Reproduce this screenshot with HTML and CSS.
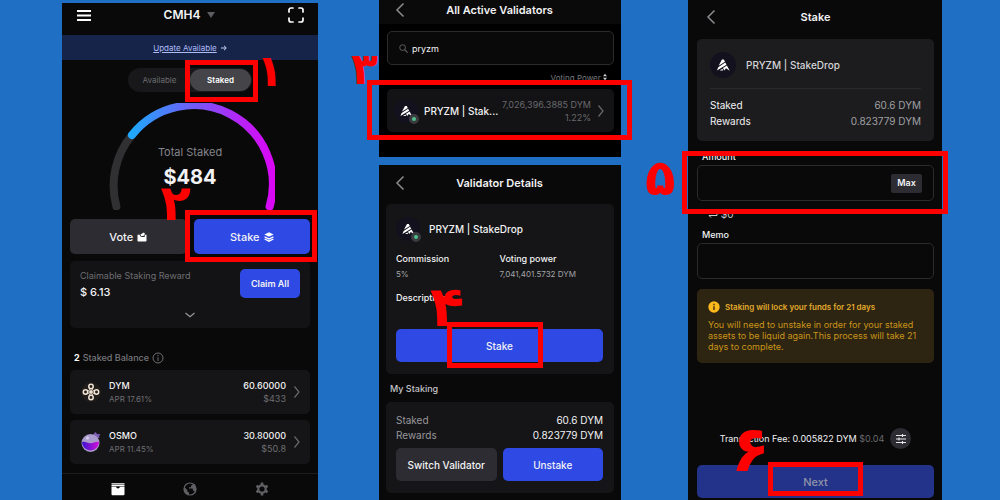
FILE: index.html
```html
<!DOCTYPE html>
<html lang="en">
<head>
    <meta charset="UTF-8">
    <meta name="viewport" content="width=device-width, initial-scale=1.0">
    <title>Staking DYM with PRYZM</title>
    <link rel="stylesheet" href="styles.css">
</head>
<body>
    <!-- shared icons -->
    <svg class="sprite" aria-hidden="true">
        <symbol id="pryzm" viewBox="0 0 24 24">
            <circle cx="12" cy="12" r="12" fill="#14111f"/>
            <path d="M11 7h1.800l1 2-5.800 3.600zM14.100 9.700l1.100 2.100-8.800 5.200 1.200-2.900zM15.600 12.500l2.600 4.700-3.400-2.200-1.600 2-1.200-2.200z" fill="#fff"/>
            <path d="M9 17l2.500-1.500.6 1.500z" fill="#fff"/>
        </symbol>
        <symbol id="back" viewBox="0 0 10 16">
            <path d="M8.500 1.500L2 8l6.500 6.500" fill="none" stroke="currentColor" stroke-width="1.500"/>
        </symbol>
        <symbol id="next" viewBox="0 0 8 14">
            <path d="M1.500 1.500L6 7l-4.500 5.500" fill="none" stroke="currentColor" stroke-width="1.200"/>
        </symbol>
    </svg>

    <main class="board">
        <section class="phone home">
            <header class="topbar">
                <button class="icon-btn" aria-label="Menu">
                    <svg width="14" height="11" viewBox="0 0 14 11"><path d="M0 1h14M0 5.500h14M0 10h14" stroke="#fff" stroke-width="1.800"/></svg>
                </button>
                <button class="account">CMH4 <svg width="8" height="6" viewBox="0 0 8 6"><path d="M0 0h8L4 6z" fill="#5d5d61"/></svg></button>
                <button class="icon-btn" aria-label="Scan">
                    <svg width="16" height="16" viewBox="0 0 16 16"><path d="M1 5V3a2 2 0 0 1 2-2h2M11 1h2a2 2 0 0 1 2 2v2M15 11v2a2 2 0 0 1-2 2h-2M5 15H3a2 2 0 0 1-2-2v-2" fill="none" stroke="#fff" stroke-width="1.700" stroke-linecap="round"/></svg>
                </button>
            </header>
            <div class="update"><a href="#">Update Available</a>
                <svg width="6" height="6" viewBox="0 0 6 6"><path d="M0 3h5M3 .8L5.300 3 3 5.200" fill="none" stroke="#c5cff5"/></svg>
            </div>

            <div class="home-body">
                <div class="toggle">
                    <button>Available</button>
                    <div class="spot">
                        <button class="on">Staked</button>
                        <span class="mark mark-1"></span>
                        <span class="step step-1">۱</span>
                    </div>
                </div>

                <div class="gauge">
                    <svg width="170" height="107" viewBox="-1 0 170 107">
                        <defs>
                            <linearGradient id="arc" x1="0" y1="0" x2="1" y2="0">
                                <stop offset="0" stop-color="#1fa8ff"/>
                                <stop offset=".45" stop-color="#7459f7"/>
                                <stop offset=".75" stop-color="#b327f8"/>
                                <stop offset="1" stop-color="#da07f5"/>
                            </linearGradient>
                        </defs>
                        <path d="M10.400 103.500A79 79 0 0 1 26 32" fill="none" stroke="#303033" stroke-width="8" stroke-linecap="round"/>
                        <path d="M26 32A79 79 0 0 1 163.600 103.500" fill="none" stroke="url(#arc)" stroke-width="8" stroke-linecap="round"/>
                    </svg>
                    <div class="total">
                        <p>Total Staked</p>
                        <strong>$484</strong>
                    </div>
                </div>

                <div class="pair">
                    <button class="btn dark">Vote
                        <svg width="10" height="10" viewBox="0 0 10 10"><path d="M.5 2.800h2.300C3 4.500 4 5 5 5h3l-.6-1.200L8.500 2.800h1v6a.8.8 0 0 1-.8.8H1.300a.8.8 0 0 1-.8-.8z" fill="#fff"/><path d="M3.400 2.600L6.800.4l1.300 1.700L6.300 4H4.200z" fill="#fff"/></svg>
                    </button>
                    <div class="spot">
                        <button class="btn blue">Stake
                            <svg width="10" height="10" viewBox="0 0 10 10"><path d="M5 .2l4.600 2.300L5 4.800.4 2.500z" fill="#fff"/><path d="M.6 4.800L5 7l4.400-2.200M.6 7L5 9.200 9.400 7" fill="none" stroke="#fff" stroke-width="1.300"/></svg>
                        </button>
                        <span class="mark mark-2"></span>
                        <span class="step step-2">۲</span>
                    </div>
                </div>

                <div class="claim">
                    <div>
                        <p class="muted">Claimable Staking Reward</p>
                        <p class="reward">$ 6.13</p>
                    </div>
                    <button class="btn blue small">Claim All</button>
                    <svg class="more" width="12" height="6" viewBox="0 0 12 6"><path d="M1.500 1L6 4.800 10.500 1" fill="none" stroke="#98989c" stroke-width="1.200"/></svg>
                </div>

                <h2 class="balance"><b>2</b> Staked Balance
                    <svg width="12" height="12" viewBox="0 0 12 12"><circle cx="6" cy="6" r="5" fill="none" stroke="#6d6d72"/><path d="M6 5.200V9M6 3v1.200" stroke="#6d6d72"/></svg>
                </h2>

                <div class="coin">
                    <svg width="20" height="20" viewBox="0 0 20 20"><circle cx="10" cy="10" r="10" fill="#211d1a"/><g fill="none" stroke="#f2e5d5" stroke-width="1.500"><circle cx="10" cy="4.500" r="2.200"/><circle cx="10" cy="15.500" r="2.200"/><circle cx="4.500" cy="10" r="2.200"/><circle cx="15.500" cy="10" r="2.200"/><path d="M8.300 6.500l3.400 7M11.700 6.500l-3.400 7M6.500 8.300l7 3.400M6.500 11.700l7-3.400" stroke-width="1"/></g></svg>
                    <div><h3>DYM</h3><p>APR 17.61%</p></div>
                    <div class="amount"><h3>60.60000</h3><p>$433</p></div>
                    <svg class="go" width="8" height="14"><use href="#next"/></svg>
                </div>
                <div class="coin">
                    <svg width="20" height="20" viewBox="0 0 20 20">
                        <defs><linearGradient id="osmo" x1="0" y1="0" x2="1" y2="0"><stop offset="0" stop-color="#3a14d0"/><stop offset="1" stop-color="#d510d8"/></linearGradient></defs>
                        <path d="M12 2.500l2.500-2.500 1.600 2 3.400.3-1.500 2 .5 1.500-2.300.7z" fill="#7d5cb3"/>
                        <circle cx="9.500" cy="11" r="9" fill="#a99bcb"/>
                        <circle cx="6.500" cy="6" r="1.500" fill="#d7cfe8"/>
                        <path d="M1 10c3-1 5.500 1.200 8.500 1.200s5.500-2 8.500-1.200a8.500 8.500 0 1 1-17 0z" fill="url(#osmo)"/>
                    </svg>
                    <div><h3>OSMO</h3><p>APR 11.45%</p></div>
                    <div class="amount"><h3>30.80000</h3><p>$50.8</p></div>
                    <svg class="go" width="8" height="14"><use href="#next"/></svg>
                </div>
            </div>

            <nav class="tabs">
                <a href="#" aria-label="Wallet"><svg width="14" height="14" viewBox="0 0 14 14"><path d="M.5 1.200h13v1.200H.5zM.5 3h13v1.200H.5zM.5 4.800h4.700c0 1 .8 1.700 1.800 1.700s1.800-.7 1.800-1.700h4.700v7.500a1 1 0 0 1-1 1h-11a1 1 0 0 1-1-1z" fill="#fff"/></svg></a>
                <a href="#" aria-label="Explore"><svg width="14" height="14" viewBox="0 0 14 14"><circle cx="7" cy="7" r="6" fill="none" stroke="#606064" stroke-width="1.200"/><path d="M1.300 5l3 3v1.500l1.700 1V13L3 12 .8 8zM9.500 1.300l.3 1.500-1.800 1v1.400H6v1.300h3.500l1 2.500h1l.7 1.800L13.300 7 12 3z" fill="#606064"/></svg></a>
                <a href="#" aria-label="Settings"><svg width="14" height="14" viewBox="0 0 14 14"><circle cx="7" cy="7" r="3.700" fill="none" stroke="#606064" stroke-width="2.200"/><path d="M7 .5v3M7 10.500v3M1.400 3.800L4 5.300M10 8.700l2.600 1.500M1.400 10.200L4 8.700M10 5.300l2.600-1.500" stroke="#606064" stroke-width="2.600"/></svg></a>
            </nav>
        </section>

        <div class="middle">
            <section class="phone list">
                <header class="title">
                    <button class="icon-btn" aria-label="Back"><svg width="10" height="16"><use href="#back"/></svg></button>
                    <h1>All Active Validators</h1>
                </header>
                <div class="list-body">
                    <label class="search">
                        <svg width="9" height="9" viewBox="0 0 10 10"><circle cx="4" cy="4" r="3.200" fill="none" stroke="#66666a"/><path d="M6.300 6.300L9.500 9.500" stroke="#66666a" stroke-width="1.200"/></svg>
                        <input type="text" value="pryzm" aria-label="Search validators">
                    </label>
                    <p class="sort">Voting Power <svg width="4" height="8" viewBox="0 0 5 8"><path d="M2.500 0L5 3H0zM2.500 8L0 5h5z" fill="#ccc"/></svg></p>
                    <div class="validator spot">
                        <span class="avatar"><svg width="24" height="24"><use href="#pryzm"/></svg></span>
                        <h3>PRYZM | Stak...</h3>
                        <p>7,026,396.3885 DYM<br>1.22%</p>
                        <svg class="go" width="8" height="14"><use href="#next"/></svg>
                        <span class="mark mark-3"></span>
                        <span class="step step-3">۳</span>
                    </div>
                </div>
            </section>

            <section class="phone details">
                <header class="title">
                    <button class="icon-btn" aria-label="Back"><svg width="10" height="16"><use href="#back"/></svg></button>
                    <h1>Validator Details</h1>
                </header>
                <div class="card info">
                    <div class="who">
                        <span class="avatar"><svg width="24" height="24"><use href="#pryzm"/></svg></span>
                        <h2>PRYZM | StakeDrop</h2>
                    </div>
                    <dl class="facts">
                        <div><dt>Commission</dt><dd>5%</dd></div>
                        <div><dt>Voting power</dt><dd>7,041,401.5732 DYM</dd></div>
                    </dl>
                    <p class="label">Description</p>
                    <div class="spot">
                        <button class="btn blue">Stake</button>
                        <span class="mark mark-4"></span>
                        <span class="step step-4">۴</span>
                    </div>
                </div>
                <p class="label mine">My Staking</p>
                <div class="card holdings">
                    <dl class="rows">
                        <div><dt>Staked</dt><dd>60.6 DYM</dd></div>
                        <div><dt>Rewards</dt><dd>0.823779 DYM</dd></div>
                    </dl>
                    <div class="pair">
                        <button class="btn dark">Switch Validator</button>
                        <button class="btn blue">Unstake</button>
                    </div>
                </div>
            </section>
        </div>

        <section class="phone stake">
            <header class="title">
                <button class="icon-btn" aria-label="Back"><svg width="10" height="16"><use href="#back"/></svg></button>
                <h1>Stake</h1>
            </header>
            <div class="card summary">
                <div class="who">
                    <svg width="26" height="26"><use href="#pryzm"/></svg>
                    <h2>PRYZM | StakeDrop</h2>
                </div>
                <dl class="rows">
                    <div><dt>Staked</dt><dd>60.6 DYM</dd></div>
                    <div><dt>Rewards</dt><dd>0.823779 DYM</dd></div>
                </dl>
            </div>
            <label class="label" for="amount">Amount</label>
            <div class="field spot">
                <input type="text" id="amount">
                <button class="max">Max</button>
                <span class="mark mark-5"></span>
                <span class="step step-5">۵</span>
            </div>
            <p class="fiat"><svg width="10" height="9" viewBox="0 0 10 9"><path d="M1 4V2.500h8L7 .5M9 5v1.500H1l2 2" fill="none" stroke="#ccc"/></svg> $0</p>
            <label class="label" for="memo">Memo</label>
            <div class="field">
                <input type="text" id="memo">
            </div>
            <div class="warning">
                <h3><svg width="12" height="12" viewBox="0 0 12 12"><circle cx="6" cy="6" r="5.700" fill="#fcb81c"/><path d="M6 5.200V9M6 2.800v1.400" stroke="#2f2410" stroke-width="1.300"/></svg> Staking will lock your funds for 21 days</h3>
                <p>You will need to unstake in order for your staked assets to be liquid again.This process will take 21 days to complete.</p>
            </div>
            <div class="fee">
                <p>Transaction Fee: 0.005822 DYM <span>$0.04</span></p>
                <button class="tune" aria-label="Fee settings">
                    <svg width="12" height="10" viewBox="0 0 12 10"><path d="M1 1.500h10M1 5h10M1 8.500h10M7.500 0v3M4 3.500v3M7.500 7v3" stroke="#e8e8ea" stroke-width="1.100"/></svg>
                </button>
            </div>
            <div class="spot">
                <button class="btn next">Next</button>
                <span class="mark mark-6"></span>
                <span class="step step-6">۶</span>
            </div>
        </section>
    </main>
</body>
</html>
```
FILE: styles.css
```css
* {
    box-sizing: border-box;
}
body {
    margin: 0;
    background: #1f6fc5;
    color: #f2f2f4;
    font-family: Inter, "Liberation Sans", sans-serif;
    font-size: 10px;
    line-height: 14px;
}
h1, h2, h3, p, dl, dd {
    margin: 0;
    font-size: inherit;
    font-weight: 500;
}
p, dd, dt {
    font-weight: 400;
}
button, input {
    font: inherit;
    color: inherit;
    border: none;
    background: none;
    padding: 0;
}
button {
    cursor: pointer;
}
svg {
    flex: none;
}
.sprite {
    position: absolute;
    width: 0;
    height: 0;
}

.board {
    display: grid;
    grid-template-columns: 256fr 61px 242fr 67px 254fr;
    min-height: 100vh;
    padding: 0 58px 0 62px;
}
.middle {
    grid-column: 3;
    display: flex;
    flex-direction: column;
    gap: 8px;
}
.phone {
    background: #09090a;
}
.icon-btn {
    display: flex;
}
.btn {
    display: flex;
    align-items: center;
    justify-content: center;
    gap: 4px;
    width: 100%;
    height: 33px;
    border-radius: 5px;
    font-weight: 500;
}
.blue {
    background: #2f49e4;
}
.dark {
    background: #2c2c32;
}
.pair {
    display: grid;
    grid-template-columns: 1fr 1fr;
    gap: 6px;
}
.card {
    background: #151517;
    border-radius: 5px;
}
.go {
    color: #69696d;
}
.label {
    display: block;
    font-weight: 500;
    font-size: 9px;
}

/* red highlight boxes and step numbers */
.spot {
    position: relative;
}
.mark {
    position: absolute;
    z-index: 2;
    border: 5px solid #f00;
    pointer-events: none;
}
.step {
    position: absolute;
    z-index: 3;
    color: #f00;
    font: bold 44px/1 "DejaVu Sans", sans-serif;
    pointer-events: none;
}
.mark-1 { inset: -9px -7px -11px -5px; }
.mark-2 { inset: -9px -7px -8px -9px; }
.mark-3 { inset: -9px -18px -8px -20px; }
.mark-4 { inset: -7px 60px -6px 51px; }
.mark-5 { inset: -15px -15px -14px -16px; }
.mark-6 { inset: -3px 71px 2px; }
.step-1 { top: -20px; right: -32px; }
.step-2 { top: -41px; left: -33px; font-size: 50px; }
.step-3 { top: -42px; left: -36px; }
.step-4 { top: -50px; left: 34px; font-size: 56px; }
.step-5 { top: -13px; left: -53px; font-size: 50px; }
.step-6 { top: -48px; left: 34px; font-size: 64px; }

/* home */
.home {
    margin-top: 3px;
    display: flex;
    flex-direction: column;
}
.topbar {
    display: flex;
    align-items: center;
    justify-content: space-between;
    padding: 4px 14px 12px 15px;
}
.account {
    display: flex;
    align-items: center;
    gap: 7px;
    font-size: 12px;
    line-height: 16px;
    font-weight: 600;
}
.update {
    display: flex;
    align-items: center;
    justify-content: center;
    gap: 4px;
    height: 25px;
    background: #17244a;
    font-size: 8px;
}
.update a {
    color: #aebcf5;
}
.home-body {
    padding: 8px 8px 9px;
}
.toggle {
    display: flex;
    justify-content: space-between;
    width: 124px;
    margin: 0 auto;
    padding: 1px;
    border-radius: 12px;
    background: #18181a;
    font-size: 8px;
}
.toggle button {
    width: 61px;
    height: 22px;
    color: #6b6b70;
}
.toggle .on {
    display: block;
    border-radius: 11px;
    background: #444449;
    color: #fff;
    font-weight: 600;
}
.gauge {
    display: grid;
    justify-items: center;
    margin: 11px 0 9px;
}
.gauge > * {
    grid-area: 1 / 1;
}
.total {
    padding-top: 41px;
    text-align: center;
}
.total p {
    color: #85858a;
    font-size: 11px;
    line-height: 16px;
}
.total strong {
    display: block;
    font-size: 20px;
    line-height: 34px;
}
.home .pair {
    gap: 7px;
}
.home .pair .btn {
    height: 35px;
    font-size: 11px;
}
.claim {
    display: grid;
    grid-template-columns: 1fr 60px;
    margin-top: 7px;
    padding: 8px 10px 10px;
    border-radius: 5px;
    background: #131315;
}
.claim .small {
    height: 29px;
    font-size: 9px;
    font-weight: 600;
}
.muted {
    color: #6d6d72;
    font-size: 9px;
}
.reward {
    margin-top: 2px;
    font-size: 11px;
    font-weight: 500;
}
.more {
    grid-column: 1 / 3;
    justify-self: center;
    margin-top: 13px;
}
.balance {
    display: flex;
    align-items: center;
    gap: 3px;
    margin: 23px 4px 5px;
    color: #77777c;
    font-size: 9px;
}
.balance b {
    color: #fff;
}
.coin {
    display: flex;
    align-items: center;
    height: 44px;
    margin-bottom: 6px;
    padding: 0 9px 0 11px;
    border-radius: 5px;
    background: #151517;
    font-size: 9px;
}
.coin:last-child {
    margin-bottom: 0;
}
.coin div {
    margin-left: 8px;
}
.coin p {
    color: #6d6d72;
    font-size: 8px;
    line-height: 12px;
}
.coin .amount {
    margin: 0 7px 0 auto;
    text-align: right;
}
.coin .amount p {
    font-size: 9px;
}
.tabs {
    display: grid;
    grid-template-columns: repeat(3, 72px);
    justify-content: center;
    justify-items: center;
    padding: 8px 0;
    border-top: 1px solid #1d1d20;
}

/* shared header of the sub screens */
.title {
    display: grid;
    grid-template-columns: 10px 1fr 10px;
    align-items: center;
    color: #8c8c90;
}
.title h1 {
    color: #f2f2f4;
    text-align: center;
    font-size: 11px;
    line-height: 16px;
    font-weight: 600;
}

/* validator list */
.list {
    background: #000;
}
.list .title {
    padding: 2px 17px 6px 16px;
    background: #0a0a0b;
}
.list-body {
    padding: 7px 7px 25px 8px;
}
.search, .field {
    display: flex;
    align-items: center;
    border: 1px solid #2b2b2e;
    border-radius: 5px;
}
.search {
    height: 34px;
    gap: 4px;
    padding: 0 11px;
    background: #09090a;
    font-size: 9px;
}
.search input, .field input {
    flex: 1;
    min-width: 0;
    height: 100%;
    outline: none;
}
.sort {
    margin: 6px 7px 4px;
    color: #77777b;
    text-align: right;
    font-size: 8px;
}
.validator {
    display: flex;
    align-items: center;
    height: 43px;
    padding: 0 9px 0 7px;
    border-radius: 5px;
    background: #131315;
}
.validator h3 {
    margin-left: 6px;
}
.validator p {
    margin: 0 6px 0 auto;
    color: #69696d;
    text-align: right;
    font-size: 9px;
    line-height: 13px;
}
.avatar {
    display: flex;
    position: relative;
}
.avatar::after {
    content: "";
    position: absolute;
    right: -1px;
    bottom: -1px;
    width: 4px;
    height: 4px;
    border: 3px solid #3b3b3f;
    border-radius: 50%;
    background: #4fc08d;
}

/* validator details */
.details {
    flex: 1;
    padding: 0 7px 8px;
}
.details .title {
    padding: 10px 10px 13px 9px;
}
.info {
    padding: 13px 11px 12px 10px;
}
.who {
    display: flex;
    align-items: center;
}
.info .who h2 {
    margin-left: 9px;
}
.facts {
    display: grid;
    grid-template-columns: 1fr 1fr;
    margin: 11px 0 9px;
    font-size: 9px;
}
.facts dt {
    font-weight: 500;
}
.facts dd {
    color: #a4a4a8;
    font-size: 8px;
    line-height: 16px;
}
.info .label {
    margin-bottom: 24px;
}
.mine {
    margin: 8px 4px 6px;
    color: #c4c4c8;
}
.holdings {
    padding: 11px 11px 12px 10px;
}
.rows div {
    display: flex;
    justify-content: space-between;
    line-height: 15px;
}
.holdings dt {
    color: #98989c;
}
.holdings .pair {
    margin-top: 5px;
}

/* stake form */
.stake {
    grid-column: 5;
    padding: 0 8px 2px 9px;
}
.stake .title {
    padding: 9px 9px 14px;
}
.summary {
    padding: 13px 13px 12px;
    background: #1c1c1e;
}
.summary .who {
    padding-bottom: 10px;
    margin-bottom: 8px;
    border-bottom: 1px solid #2a2a2d;
}
.summary .who h2 {
    margin-left: 10px;
    color: #d4d4d8;
}
.summary .rows div {
    line-height: 16px;
}
.summary dd {
    color: #a0a0a4;
}
.stake .label {
    margin: 0 5px 1px;
}
.summary + .label {
    margin-top: 9px;
}
.field {
    height: 36px;
    padding: 0 11px;
}
.max {
    width: 31px;
    height: 19px;
    border-radius: 2px;
    background: #2c2c32;
    font-size: 9px;
    font-weight: 600;
}
.fiat {
    margin: 6px 11px 7px;
    color: #ccc;
}
.warning {
    margin-top: 10px;
    padding: 11px;
    border-radius: 5px;
    background: #2e2412;
    color: #c99519;
    font-size: 9px;
    line-height: 11px;
}
.warning h3 {
    display: flex;
    align-items: center;
    gap: 5px;
    margin-bottom: 5px;
    color: #e2ab2c;
    font-size: 8px;
    line-height: 14px;
    font-weight: 600;
}
.fee {
    display: flex;
    align-items: center;
    justify-content: center;
    gap: 6px;
    margin: 65px 0 16px;
    font-size: 9px;
}
.fee span {
    color: #69696d;
}
.tune {
    display: grid;
    place-items: center;
    width: 21px;
    height: 21px;
    border-radius: 50%;
    background: #2c2c32;
}
.next {
    background: #24338a;
    color: #8f93a8;
    font-size: 11px;
}
```
